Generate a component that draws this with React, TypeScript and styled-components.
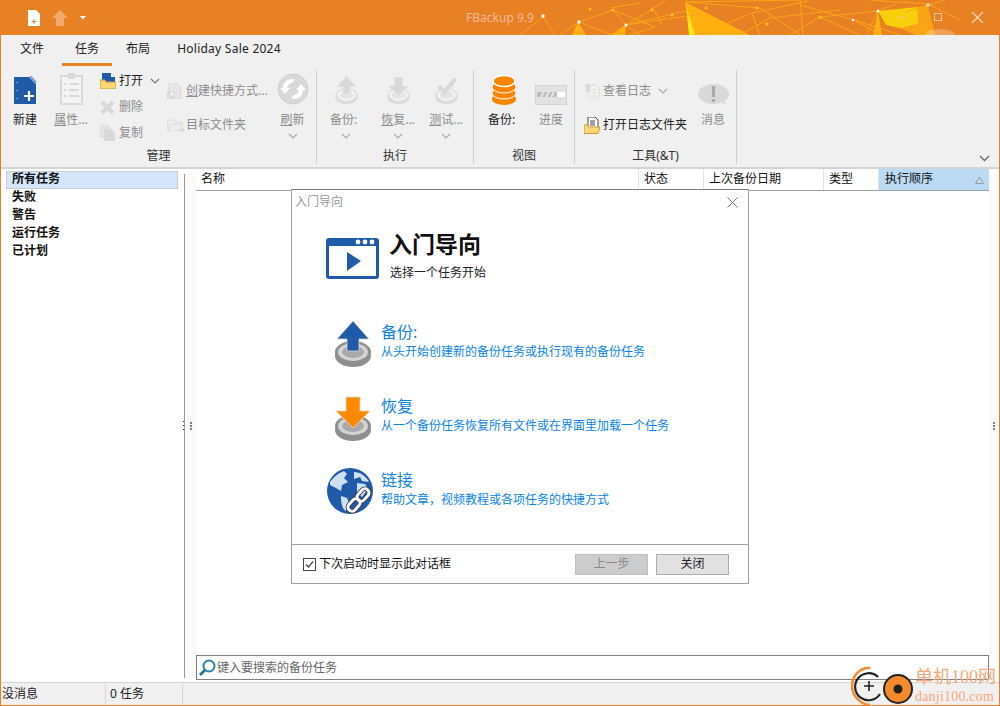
import styled, { createGlobalStyle } from "styled-components";
import { ReactNode } from "react";

const GlobalStyle = createGlobalStyle`
  html, body {
    margin: 0;
    padding: 0;
    background: #fff;
  }
  * {
    box-sizing: border-box;
  }
`;

const FONT = `"Noto Sans", "Noto Sans CJK SC", sans-serif`;
const ORANGE = "#e88024";
const BLUE = "#1f5ba8";
const DIM = "#d9d9d9";

const Window = styled.div`
  position: relative;
  width: 1000px;
  height: 706px;
  display: flex;
  flex-direction: column;
  overflow: hidden;
  border: 1px solid ${ORANGE};
  border-top: 0;
  font: 12px/16px ${FONT};
  color: #222;
  background: #fff;
`;

const TitleBar = styled.div`
  position: relative;
  height: 35px;
  margin: 0 -1px;
  flex: none;
  background: ${ORANGE};
  display: flex;
  align-items: center;
  justify-content: center;
`;

const TitleArt = styled.svg`
  position: absolute;
  left: 0;
  top: 0;
`;

const QuickAccess = styled.div`
  position: absolute;
  left: 28px;
  top: 10px;
  display: flex;
  align-items: center;
  gap: 12px;
`;

const TitleText = styled.div`
  position: relative;
  color: #f4b89c;
  font-size: 12px;
`;

const Ribbon = styled.div`
  flex: none;
  height: 134px;
  background: #f0f0f0;
  border-bottom: 2px solid #d4d4d4;
  position: relative;
`;

const TabRow = styled.div`
  height: 30px;
  display: flex;
  padding-left: 1px;
`;

const Tab = styled.div<{ $active?: boolean; $w: number }>`
  width: ${(p) => p.$w}px;
  height: 31px;
  display: flex;
  align-items: center;
  justify-content: center;
  font-size: 12px;
  border-bottom: 3px solid ${(p) => (p.$active ? ORANGE : "transparent")};
`;

const SaleTab = styled(Tab)`
  letter-spacing: 0.25px;
`;

const Groups = styled.div`
  display: flex;
  height: 99px;
`;

const Group = styled.div<{ $w: number }>`
  width: ${(p) => p.$w}px;
  flex: none;
  display: flex;
  flex-direction: column;
  border-right: 1px solid #cfcfcf;
  margin-top: 5px;
`;

const GroupBody = styled.div`
  flex: 1;
  display: flex;
`;

const GroupLabel = styled.div`
  height: 16px;
  text-align: center;
  color: #333;
`;

const LargeButton = styled.div<{ $w: number; $off?: boolean }>`
  width: ${(p) => p.$w}px;
  flex: none;
  display: flex;
  flex-direction: column;
  align-items: center;
  color: ${(p) => (p.$off ? "#8c8c8c" : "#222")};
`;

const LargeIcon = styled.div`
  height: 35px;
  display: flex;
  align-items: flex-end;
  justify-content: center;
`;

const LargeLabel = styled.div<{ $colon?: boolean }>`
  margin-top: 7px;
  white-space: nowrap;
  padding-right: ${(p) => (p.$colon ? 5 : 0)}px;
`;

const Chevron = styled.svg`
  display: block;
  margin-top: 5px;
`;

const InlineChevron = styled(Chevron)<{ $gap: number }>`
  margin: 0 0 0 ${(p) => p.$gap}px;
`;

const SmallColumn = styled.div<{ $w: number; $pad: number; $gap: number; $top: number }>`
  width: ${(p) => p.$w}px;
  flex: none;
  display: flex;
  flex-direction: column;
  padding: ${(p) => p.$top}px 0 0 ${(p) => p.$pad}px;
  gap: ${(p) => p.$gap}px;
`;

const SmallButton = styled.div<{ $off?: boolean }>`
  height: 16px;
  display: flex;
  align-items: center;
  white-space: nowrap;
  color: ${(p) => (p.$off ? "#8c8c8c" : "#222")};
`;

const SmallIcon = styled.span`
  width: 19px;
  flex: none;
  display: flex;
`;

const RibbonCollapse = styled.svg`
  position: absolute;
  right: 9px;
  bottom: 5px;
`;

const Content = styled.div`
  flex: 1;
  min-height: 0;
  display: flex;
`;

const Sidebar = styled.div`
  width: 183px;
  flex: none;
  padding: 2px 5px;
`;

const SideItem = styled.div<{ $selected?: boolean }>`
  height: 18px;
  width: 172px;
  padding-left: 5px;
  line-height: 13px;
  font-weight: 700;
  color: #111;
  background: ${(p) => (p.$selected ? "#d5e6fb" : "transparent")};
  border: 1px solid ${(p) => (p.$selected ? "#c4ccd6" : "transparent")};
`;

const Splitter = styled.div<{ $w: number; $line?: boolean }>`
  position: relative;
  width: ${(p) => p.$w}px;
  flex: none;
  margin: 5px 0 4px;
  background: #fafafa;
  border-left: ${(p) => (p.$line ? "1px solid #999" : "0")};
  display: flex;
  align-items: center;
  justify-content: center;
`;

const Grip = styled.div`
  width: 2px;
  height: 8px;
  background: repeating-linear-gradient(#808080 0 2px, transparent 2px 3px);
`;

const EdgeDots = styled.div`
  position: absolute;
  left: -2px;
  top: 50%;
  width: 1px;
  height: 9px;
  margin-top: -5px;
  background: repeating-linear-gradient(#333 0 1px, transparent 1px 4px);
`;

const Main = styled.div`
  flex: 1;
  min-width: 0;
  display: flex;
  flex-direction: column;
`;

const TableHeader = styled.div`
  height: 22px;
  flex: none;
  display: flex;
  border-bottom: 1px solid #a0a0a0;
`;

const HeaderCell = styled.div<{ $w: number; $active?: boolean }>`
  width: ${(p) => p.$w}px;
  flex: none;
  padding: 0 4px 0 ${(p) => (p.$active ? 6 : 5)}px;
  line-height: 19px;
  color: #111;
  background: ${(p) => (p.$active ? "#bbdaf3" : "transparent")};
  border-right: 1px solid ${(p) => (p.$active ? "transparent" : "#e3e3e3")};
  display: flex;
  justify-content: space-between;
`;

const SortMark = styled.svg`
  margin-top: 7px;
`;

const TableBody = styled.div`
  flex: 1;
`;

const SearchBar = styled.div`
  height: 25px;
  margin-bottom: 2px;
  flex: none;
  border: 1px solid #808080;
  display: flex;
  align-items: center;
  gap: 1px;
  padding-left: 1px;
  color: #666;
`;

const StatusBar = styled.div`
  height: 23px;
  flex: none;
  display: flex;
  background: #f0f0f0;
  border-top: 1px solid #d4d4d4;
`;

const StatusCell = styled.div<{ $w: number; $pad: number }>`
  width: ${(p) => p.$w}px;
  flex: none;
  padding-left: ${(p) => p.$pad}px;
  line-height: 20px;
  color: #222;
  border-right: 1px solid #d6d6d6;
  margin: 1px 0;
`;

const Dialog = styled.div`
  position: absolute;
  left: 290px;
  top: 189px;
  width: 458px;
  height: 395px;
  background: #fff;
  border: 1px solid #a0a0a0;
  border-top-color: #808080;
  display: flex;
  flex-direction: column;
`;

const DialogTitle = styled.div`
  height: 24px;
  flex: none;
  display: flex;
  align-items: center;
  justify-content: space-between;
  padding: 0 10px 0 3px;
  color: #999;
`;

const DialogBody = styled.div`
  flex: 1;
  display: flex;
  flex-direction: column;
  padding: 24px 0 0 34px;
`;

const Heading = styled.div`
  display: flex;
  height: 41px;
  gap: 11px;
  margin-bottom: 41px;
`;

const HeadingText = styled.div`
  margin-top: -9px;
`;

const HeadingTitle = styled.div`
  margin-left: -1px;
  font-size: 23px;
  line-height: 30px;
  font-weight: 700;
  color: #111;
`;

const HeadingSub = styled.div`
  margin-top: 6px;
  color: #222;
`;

const ActionList = styled.div`
  display: flex;
  flex-direction: column;
  gap: 26px;
`;

const Action = styled.div`
  display: flex;
  height: 48px;
  gap: 3px;
`;

const ActionIcon = styled.div<{ $pad: number }>`
  width: 52px;
  flex: none;
  padding-left: ${(p) => p.$pad}px;
`;

const ActionText = styled.div`
  padding-top: 2px;
  color: #0a84e6;
`;

const ActionTitle = styled.div`
  font-size: 16px;
  line-height: 20px;
`;

const ActionDesc = styled.div`
  margin-top: 2px;
`;

const DialogFooter = styled.div`
  height: 39px;
  flex: none;
  border-top: 1px solid #a0a0a0;
  display: flex;
  align-items: center;
  padding: 0 19px 0 11px;
`;

const CheckBox = styled.svg`
  flex: none;
  margin-right: 3px;
`;

const FooterLabel = styled.div`
  flex: 1;
  color: #111;
`;

const DialogButton = styled.div<{ $off?: boolean }>`
  width: 73px;
  height: 21px;
  margin-left: 8px;
  display: flex;
  align-items: center;
  justify-content: center;
  background: ${(p) => (p.$off ? "#cccccc" : "#e1e1e1")};
  border: 1px solid ${(p) => (p.$off ? "#bfbfbf" : "#adadad")};
  color: ${(p) => (p.$off ? "#8a8a8a" : "#222")};
`;

const Watermark = styled.div`
  position: absolute;
  right: 3px;
  bottom: -2px;
  display: flex;
  align-items: flex-end;
`;

const WatermarkText = styled.div`
  font-family: "Liberation Serif", "Noto Sans CJK SC", serif;
  color: #f6a878;
  margin-left: 2px;
`;

const WatermarkName = styled.div`
  font-size: 18px;
  line-height: 20px;
  white-space: nowrap;
`;

const WatermarkUrl = styled.div`
  font-size: 14px;
  line-height: 20px;
  letter-spacing: 0.2px;
  white-space: nowrap;
`;

const ChevronDown = ({ color = "#a8a8a8" }: { color?: string }) => (
  <Chevron width="10" height="6" viewBox="0 0 10 6">
    <path d="M1 1l4 4 4-4" fill="none" stroke={color} strokeWidth="1.2" />
  </Chevron>
);

const RowChevron = ({ color, gap }: { color: string; gap: number }) => (
  <InlineChevron $gap={gap} width="10" height="6" viewBox="0 0 10 6">
    <path d="M1 1l4 4 4-4" fill="none" stroke={color} strokeWidth="1.2" />
  </InlineChevron>
);

const TitleDecoration = () => (
  <TitleArt width="1000" height="35" viewBox="0 0 1000 35">
    <g fill="#ffb00f">
      <path d="M685 2L750 35H690Z" />
      <path d="M878 11L882 35H873Z" />
      <path d="M917 7L928 5L935 35H915L900 28Z" opacity="0.75" />
      <path d="M626 25L625 35H612Z" />
      <path d="M578 22L572 35H586Z" />
    </g>
    <path d="M686 5L695 35H689Z" fill="#ffe812" />
    <path d="M878 11L917 7L918 24L900 28L886 25Z" fill="#f7cf0a" />
    <g stroke="#f8a814" strokeWidth="1" fill="none">
      <path d="M543 17L520 35M543 17L555 35M579 22L612 35M579 22L560 35M613 10L579 22M613 10L626 25M613 10L655 27M626 25L700 14" />
      <path d="M626 25L690 10M626 25L640 35M665 1L610 35M652 6L662 25M655 27L630 35" />
      <path d="M685 2L760 8M685 2L800 0M752 13L700 35M752 13L808 1M752 13L760 35M760 8L800 35M770 18L840 10M770 18L740 35M800 0L803 35" />
      <path d="M820 17L878 11M820 17L860 35M820 17L790 35M854 20L880 35M854 20L800 5M878 11L895 4M878 11L866 35M928 4L870 0M928 4L960 20" />
      <path d="M855 20L900 35M905 12L945 0M610 8L640 3" />
    </g>
    <g fill="#ffc21f">
      <circle cx="590" cy="9" r="1.5" />
      <circle cx="613" cy="10" r="1.5" />
      <circle cx="652" cy="10" r="1.5" />
      <circle cx="672" cy="15" r="1.5" />
      <circle cx="706" cy="8" r="1.5" />
      <circle cx="757" cy="8" r="1.5" />
      <circle cx="767" cy="24" r="1.5" />
      <circle cx="820" cy="17" r="1.5" />
    </g>
    <g fill="#fff">
      <circle cx="543" cy="16" r="1.7" />
      <circle cx="579" cy="22" r="1.7" />
      <circle cx="626" cy="25" r="1.5" />
      <circle cx="853" cy="20" r="1.3" />
      <circle cx="878" cy="11" r="1.5" />
      <circle cx="928" cy="5" r="1.7" fill="#fbd9c0" />
    </g>
    <path d="M925 35a15 6 0 0 1 30 0Z" fill="#fff" opacity="0.25" />
    <path d="M897 17h9" stroke="#f8c880" strokeWidth="1" />
    <rect x="934.5" y="13.5" width="7" height="7" fill="none" stroke="#f3c9a0" />
    <path d="M972 12l11 11M983 12l-11 11" stroke="#f6d8c0" strokeWidth="1.2" />
  </TitleArt>
);

const NewFileWhite = () => (
  <svg width="12" height="16" viewBox="0 0 12 16">
    <path d="M0 0H8L12 4V16H0Z" fill="#fff" />
    <path d="M6 9v5M3.5 11.5h5" stroke={ORANGE} strokeWidth="1" />
  </svg>
);

const UpFaint = () => (
  <svg width="16" height="16" viewBox="0 0 16 16">
    <path d="M8 0L16 8H12V16H4V8H0Z" fill="#f2ab6e" />
  </svg>
);

const QuickDrop = () => (
  <svg width="6" height="4" viewBox="0 0 6 4">
    <path d="M0 0H6L3 3.5Z" fill="#fff" />
  </svg>
);

const NewTaskIcon = () => (
  <svg width="23" height="29" viewBox="0 0 23 29">
    <path d="M0 1H15L22 8V28H0Z" fill={BLUE} />
    <path d="M16 0L22 6.5" stroke="#7d9fcb" strokeWidth="2" />
    <path d="M15 15v10M10 20h10" stroke="#fff" strokeWidth="2.2" />
    <path d="M3 6v1M3 14v1M3 22v1" stroke="#fff" strokeWidth="1" />
  </svg>
);

const PropsIcon = () => (
  <svg width="23" height="32" viewBox="0 0 23 32">
    <rect x="1" y="3" width="21" height="28" fill="#f4f4f4" stroke={DIM} strokeWidth="2" />
    <rect x="8" y="0" width="7" height="6" fill={DIM} />
    <path d="M4 11h2M9 11h10M4 17h2M9 17h10M4 23h2M9 23h10" stroke={DIM} strokeWidth="2" />
  </svg>
);

const OpenIcon = () => (
  <svg width="16" height="16" viewBox="0 0 16 16">
    <path d="M2 0H11L15 4V10H2Z" fill={BLUE} />
    <path d="M11 0V4H15" fill="#fff" />
    <path d="M0 7H5L6 9H16V16H0Z" fill="#fbd774" stroke="#c99a3a" strokeWidth="1" />
  </svg>
);

const DeleteIcon = () => (
  <svg width="15" height="15" viewBox="0 0 15 15">
    <path d="M2 2L13 13M13 2L2 13" stroke={DIM} strokeWidth="4" />
  </svg>
);

const CopyIcon = () => (
  <svg width="15" height="16" viewBox="0 0 15 16">
    <path d="M0 0H7L9 2V12H0Z" fill="#e4e4e4" stroke={DIM} />
    <path d="M4 4H11L15 8V16H4Z" fill={DIM} />
  </svg>
);

const ShortcutIcon = () => (
  <svg width="15" height="16" viewBox="0 0 15 16">
    <path d="M2 0H10L14 4V16H2Z" fill="#e6e6e6" stroke={DIM} />
    <rect x="0" y="8" width="8" height="8" fill={DIM} />
    <path d="M2 14L6 10M3.5 10H6V12.5" stroke="#fff" fill="none" />
  </svg>
);

const FolderGoIcon = () => (
  <svg width="18" height="15" viewBox="0 0 18 15">
    <path d="M1 2H6L8 4H14V13H1Z" fill="#f2f2f2" stroke={DIM} />
    <path d="M1 13L4 6H16L14 13" fill="#ececec" stroke={DIM} />
    <path d="M11 11h4V9l3 3-3 3v-2h-4Z" fill={DIM} />
  </svg>
);

const RefreshIcon = () => (
  <svg width="32" height="32" viewBox="0 0 32 32">
    <circle cx="16" cy="16" r="15" fill={DIM} />
    <circle cx="16" cy="16" r="15" fill="none" stroke="#cfcfcf" />
    <path d="M6 15c0-5 4-9 9-9l3 1-3 3c-3 0-4 2-5 5h3l-5 6-5-6Z" fill="#fff" />
    <path d="M26 17c0 5-4 9-9 9l-3-1 3-3c3 0 4-2 5-5h-3l5-6 5 6Z" fill="#fff" />
  </svg>
);

type Kind = "up" | "down" | "check";

const DiscIcon = ({
  kind,
  width,
  arrow,
  outer,
  inner,
  ring,
  edge = "none",
}: {
  kind: Kind;
  width: number;
  arrow: string;
  outer: string;
  inner: string;
  ring: string;
  edge?: string;
}) => (
  <svg width={width} height={(width * 48) / 40} viewBox="0 0 40 48">
    <ellipse cx="20" cy="36" rx="18" ry="11" fill={outer} />
    <ellipse cx="20" cy="32" rx="18" ry="11" fill={outer} />
    <ellipse cx="20" cy="32" rx="15" ry="9" fill={ring} />
    <ellipse cx="20" cy="32" rx="11" ry="6" fill={inner} />
    {kind === "up" && (
      <path d="M20 1L36 19H26V31H14V19H4Z" fill={arrow} stroke={edge} strokeWidth="0.8" />
    )}
    {kind === "down" && (
      <path d="M13 3H27V17H37L20 34L3 17H13Z" fill={arrow} stroke={edge} strokeWidth="0.8" />
    )}
    {kind === "check" && (
      <path d="M8 18L17 28L34 6" fill="none" stroke={arrow} strokeWidth="7" />
    )}
  </svg>
);

const DimDisc = ({ kind }: { kind: Kind }) => (
  <DiscIcon kind={kind} width={25} arrow="#d9d9d9" outer="#dcdcdc" inner="#e4e4e4" ring="#f4f4f4" edge="#f0f0f0" />
);

const DatabaseIcon = () => (
  <svg width="24" height="30" viewBox="0 0 24 30">
    <ellipse cx="12" cy="24" rx="12" ry="6" fill="#fb8500" />
    <ellipse cx="12" cy="18" rx="12" ry="6" fill="#fb8500" stroke="#fff" />
    <ellipse cx="12" cy="12" rx="12" ry="6" fill="#fb8500" stroke="#fff" />
    <ellipse cx="12" cy="6" rx="11" ry="5.5" fill="#fb8500" stroke="#fff" strokeWidth="1.5" />
  </svg>
);

const ProgressIcon = () => (
  <svg width="32" height="20" viewBox="0 0 32 20">
    <rect x="0.5" y="0.5" width="31" height="19" fill="#e2e2e2" stroke="#d2d2d2" />
    <rect x="2" y="7" width="28" height="5" fill="#fff" />
    <rect x="2" y="7" width="20" height="5" fill="#bdbdbd" />
    <path d="M6 12l3-5M11 12l3-5M16 12l3-5" stroke="#eeeeee" strokeWidth="1.5" />
  </svg>
);

const LogIcon = () => (
  <svg width="16" height="16" viewBox="0 0 16 16">
    <path d="M5 2H12L15 5V16H5Z" fill="#f4f4f4" stroke={DIM} />
    <path d="M7 7h6M7 10h6M7 13h6" stroke={DIM} />
    <path d="M4 0L8 4H6V9H2V4H0Z" fill={DIM} />
  </svg>
);

const OpenLogIcon = () => (
  <svg width="16" height="17" viewBox="0 0 16 17">
    <path d="M4 0H11L14 3V11H4Z" fill="#fff" stroke="#444" />
    <path d="M6 4h5M6 6h5M6 8h5" stroke="#444" />
    <path d="M0 8H4L5 10H16L14 16.5H0Z" fill="#fbd774" stroke="#c99a3a" />
  </svg>
);

const MessageIcon = () => (
  <svg width="31" height="21" viewBox="0 0 31 21">
    <ellipse cx="15.5" cy="10" rx="15.5" ry="10" fill={DIM} />
    <path d="M22 17L28 21L26 14Z" fill={DIM} />
    <rect x="14" y="2" width="3" height="11" fill="#a9a9a9" />
    <rect x="14" y="15" width="3" height="3" fill="#a9a9a9" />
  </svg>
);

const SearchIcon = () => (
  <svg width="18" height="18" viewBox="0 0 18 18">
    <circle cx="11" cy="7" r="5.5" fill="#fff" stroke="#2a86ad" strokeWidth="2" />
    <path d="M7 11L2 16" stroke="#1d6f94" strokeWidth="2.6" />
  </svg>
);

const WizardIcon = () => (
  <svg width="53" height="41" viewBox="0 0 53 41">
    <rect x="0" y="0" width="53" height="41" rx="3" fill={BLUE} />
    <rect x="3" y="8" width="47" height="30" fill="#fff" />
    <circle cx="32" cy="4" r="2.4" fill="#fff" />
    <circle cx="39" cy="4" r="2.4" fill="#fff" />
    <circle cx="46" cy="4" r="2.4" fill="#fff" />
    <path d="M21 14L35 23L21 33Z" fill={BLUE} />
  </svg>
);

const GlobeIcon = () => (
  <svg width="48" height="46" viewBox="0 0 48 46">
    <circle cx="23" cy="23" r="23" fill={BLUE} />
    <path
      d="M3 14c3-4 8-9 14-11l3 3-3 4 4 4-6 3-1 6-5-3-6-3Z M14 28l6 2 2 5-3 8c-4-2-5-8-5-15Z M27 4c6 0 12 4 15 10l-7-1-2-4-6 2Z M30 15l8 1 3 5-6 8-5-5Z"
      fill="#cfe0f5"
    />
    <g fill="none" stroke="#333" strokeWidth="4.6">
      <rect x="32" y="20" width="8" height="14" rx="4" transform="rotate(42 36 27)" />
      <rect x="23" y="30" width="8" height="14" rx="4" transform="rotate(42 27 37)" />
    </g>
    <g fill="none" stroke="#fff" strokeWidth="3">
      <rect x="32" y="20" width="8" height="14" rx="4" transform="rotate(42 36 27)" />
      <rect x="23" y="30" width="8" height="14" rx="4" transform="rotate(42 27 37)" />
    </g>
  </svg>
);

const WatermarkLogo = () => (
  <svg width="62" height="42" viewBox="0 0 62 42">
    <path d="M19 3C9 2 1 11 1 21c0 9 7 18 18 19" fill="none" stroke="#f58a2c" strokeWidth="2.5" />
    <path d="M27 12A13.5 13.5 0 1 0 29 29" fill="none" stroke="#222" strokeWidth="2.2" />
    <path d="M18 16v10M13 21h10" stroke="#222" strokeWidth="1.6" />
    <circle cx="47" cy="24" r="14" fill="#f58a2c" stroke="#222" strokeWidth="2" />
    <circle cx="47" cy="24" r="4.5" fill="#222" />
  </svg>
);

const BigButton = ({
  w,
  icon,
  label,
  off,
  more,
  colon,
}: {
  w: number;
  icon: ReactNode;
  label: ReactNode;
  off?: boolean;
  more?: boolean;
  colon?: boolean;
}) => (
  <LargeButton $w={w} $off={off}>
    <LargeIcon>{icon}</LargeIcon>
    <LargeLabel $colon={colon}>{label}</LargeLabel>
    {more && <ChevronDown />}
  </LargeButton>
);

const Small = ({
  icon,
  off,
  children,
}: {
  icon: ReactNode;
  off?: boolean;
  children: ReactNode;
}) => (
  <SmallButton $off={off}>
    <SmallIcon>{icon}</SmallIcon>
    {children}
  </SmallButton>
);

const sideItems = ["所有任务", "失败", "警告", "运行任务", "已计划"];

const columns = [
  { name: "名称", w: 443 },
  { name: "状态", w: 65 },
  { name: "上次备份日期", w: 120 },
  { name: "类型", w: 55 },
];

function App() {
  return (
    <>
      <GlobalStyle />
      <Window>
        <TitleBar>
          <TitleDecoration />
          <QuickAccess>
            <NewFileWhite />
            <UpFaint />
            <QuickDrop />
          </QuickAccess>
          <TitleText>FBackup 9.9</TitleText>
        </TitleBar>

        <Ribbon>
          <TabRow>
            <Tab $w={60}>文件</Tab>
            <Tab $w={50} $active>任务</Tab>
            <Tab $w={52}>布局</Tab>
            <SaleTab $w={130}>Holiday Sale 2024</SaleTab>
          </TabRow>
          <Groups>
            <Group $w={316}>
              <GroupBody>
                <BigButton w={48} icon={<NewTaskIcon />} label="新建" />
                <BigButton w={44} off icon={<PropsIcon />} label={<><u>属</u>性...</>} />
                <SmallColumn $w={74} $pad={7} $top={3} $gap={10}>
                  <Small icon={<OpenIcon />}>
                    打开
                    <RowChevron color="#777" gap={7} />
                  </Small>
                  <Small off icon={<DeleteIcon />}>删除</Small>
                  <Small off icon={<CopyIcon />}>复制</Small>
                </SmallColumn>
                <SmallColumn $w={102} $pad={0} $top={13} $gap={18}>
                  <Small off icon={<ShortcutIcon />}><u>创</u>建快捷方式...</Small>
                  <Small off icon={<FolderGoIcon />}>目标文件夹</Small>
                </SmallColumn>
                <BigButton w={47} off more icon={<RefreshIcon />} label={<><u>刷</u>新</>} />
              </GroupBody>
              <GroupLabel>管理</GroupLabel>
            </Group>
            <Group $w={157}>
              <GroupBody>
                <BigButton w={58} off more colon icon={<DimDisc kind="up" />} label="备份:" />
                <BigButton w={46} off more icon={<DimDisc kind="down" />} label={<><u>恢</u>复...</>} />
                <BigButton w={50} off more icon={<DimDisc kind="check" />} label={<><u>测</u>试...</>} />
              </GroupBody>
              <GroupLabel>执行</GroupLabel>
            </Group>
            <Group $w={101}>
              <GroupBody>
                <BigButton w={60} colon icon={<DatabaseIcon />} label="备份:" />
                <BigButton w={34} off icon={<ProgressIcon />} label="进度" />
              </GroupBody>
              <GroupLabel>视图</GroupLabel>
            </Group>
            <Group $w={162}>
              <GroupBody>
                <SmallColumn $w={124} $pad={9} $top={13} $gap={18}>
                  <Small off icon={<LogIcon />}>
                    查看日志
                    <RowChevron color="#a8a8a8" gap={7} />
                  </Small>
                  <Small icon={<OpenLogIcon />}>打开日志文件夹</Small>
                </SmallColumn>
                <BigButton w={28} off icon={<MessageIcon />} label="消息" />
              </GroupBody>
              <GroupLabel>工具(&amp;T)</GroupLabel>
            </Group>
          </Groups>
          <RibbonCollapse width="11" height="7" viewBox="0 0 11 7">
            <path d="M1 1l4.5 4.5L10 1" fill="none" stroke="#666" strokeWidth="1.3" />
          </RibbonCollapse>
        </Ribbon>

        <Content>
          <Sidebar>
            {sideItems.map((item, i) => (
              <SideItem key={item} $selected={i === 0}>{item}</SideItem>
            ))}
          </Sidebar>
          <Splitter $w={12} $line>
            <EdgeDots />
            <Grip />
          </Splitter>
          <Main>
            <TableHeader>
              {columns.map((c) => (
                <HeaderCell key={c.name} $w={c.w}>{c.name}</HeaderCell>
              ))}
              <HeaderCell $w={110} $active>
                执行顺序
                <SortMark width="9" height="8" viewBox="0 0 9 8">
                  <path d="M4.5 1L8.5 7.5H0.5Z" fill="none" stroke="#999" />
                </SortMark>
              </HeaderCell>
            </TableHeader>
            <TableBody />
            <SearchBar>
              <SearchIcon />
              键入要搜索的备份任务
            </SearchBar>
          </Main>
          <Splitter $w={10}><Grip /></Splitter>
        </Content>

        <StatusBar>
          <StatusCell $w={105} $pad={1}>没消息</StatusCell>
          <StatusCell $w={77} $pad={4}>0 任务</StatusCell>
        </StatusBar>

        <Dialog>
          <DialogTitle>
            入门导向
            <svg width="11" height="11" viewBox="0 0 11 11">
              <path d="M0.5 0.5l10 10M10.5 0.5l-10 10" stroke="#777" />
            </svg>
          </DialogTitle>
          <DialogBody>
            <Heading>
              <WizardIcon />
              <HeadingText>
                <HeadingTitle>入门导向</HeadingTitle>
                <HeadingSub>选择一个任务开始</HeadingSub>
              </HeadingText>
            </Heading>
            <ActionList>
              <Action>
                <ActionIcon $pad={7}>
                  <DiscIcon kind="up" width={40} arrow={BLUE} outer="#8f8f8f" inner="#a9a9a9" ring="#d4d4d4" edge="#d8d8d8" />
                </ActionIcon>
                <ActionText>
                  <ActionTitle>备份:</ActionTitle>
                  <ActionDesc>从头开始创建新的备份任务或执行现有的备份任务</ActionDesc>
                </ActionText>
              </Action>
              <Action>
                <ActionIcon $pad={7}>
                  <DiscIcon kind="down" width={40} arrow="#fb8a00" outer="#8f8f8f" inner="#a9a9a9" ring="#d4d4d4" edge="#e8d8c0" />
                </ActionIcon>
                <ActionText>
                  <ActionTitle>恢复</ActionTitle>
                  <ActionDesc>从一个备份任务恢复所有文件或在界面里加载一个任务</ActionDesc>
                </ActionText>
              </Action>
              <Action>
                <ActionIcon $pad={1}>
                  <GlobeIcon />
                </ActionIcon>
                <ActionText>
                  <ActionTitle>链接</ActionTitle>
                  <ActionDesc>帮助文章，视频教程或各项任务的快捷方式</ActionDesc>
                </ActionText>
              </Action>
            </ActionList>
          </DialogBody>
          <DialogFooter>
            <CheckBox width="13" height="13" viewBox="0 0 13 13">
              <rect x="0.5" y="0.5" width="12" height="12" fill="#fff" stroke="#444" />
              <path d="M3 6.5L5.5 9L10 3.5" fill="none" stroke="#444" strokeWidth="1.2" />
            </CheckBox>
            <FooterLabel>下次启动时显示此对话框</FooterLabel>
            <DialogButton $off>上一步</DialogButton>
            <DialogButton>关闭</DialogButton>
          </DialogFooter>
        </Dialog>

        <Watermark>
          <WatermarkLogo />
          <WatermarkText>
            <WatermarkName>单机100网</WatermarkName>
            <WatermarkUrl>danji100.com</WatermarkUrl>
          </WatermarkText>
        </Watermark>
      </Window>
    </>
  );
}

export default App;
